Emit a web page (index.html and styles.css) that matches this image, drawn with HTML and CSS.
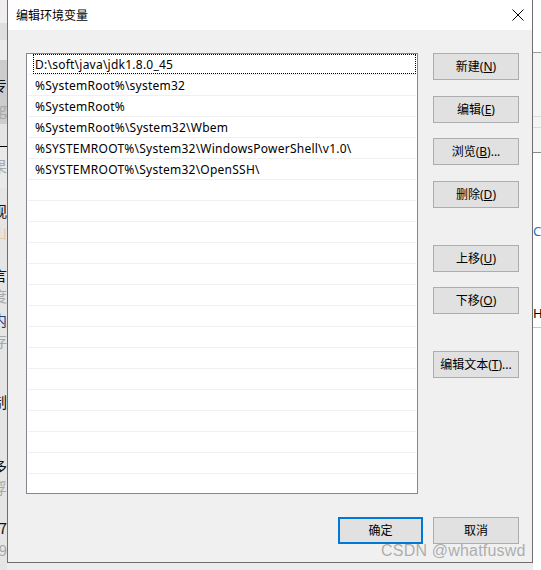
FILE: index.html
```html
<!DOCTYPE html>
<html lang="zh">
<head>
<meta charset="utf-8">
<title>编辑环境变量</title>
<link rel="stylesheet" href="styles.css">
</head>
<body>
<div class="desk">
  <div class="bg-left">
    <div class="bl b1"></div>
    <div class="bl b2"></div>
    <div class="bl b3"></div>
    <div class="bl b4">
      <div class="frag blk t1">专</div>
      <div class="frag gry t2">og</div>
    </div>
    <div class="bl b5"></div>
    <div class="bl b6"><div class="frag gry t3">果</div></div>
    <div class="bl b7">
      <div class="frag blk s1">观</div>
      <div class="frag org s2">山</div>
      <div class="frag blk s3">言</div>
      <div class="frag gry s4">度</div>
      <div class="frag blu s5">内</div>
      <div class="frag gry s6">存</div>
      <div class="frag blk s7">制</div>
      <div class="frag blk s8">多</div>
      <div class="frag gry s9">浮</div>
      <div class="frag blk s10">7</div>
      <div class="frag gry s11">9</div>
    </div>
  </div>

  <div class="dialog">
    <div class="titlebar">
      <span class="title">编辑环境变量</span>
      <svg class="close" width="12" height="12" viewBox="0 0 12 12"><path d="M0.5 0.5 L11.5 11.5 M11.5 0.5 L0.5 11.5" stroke="#000" stroke-width="1" fill="none"/></svg>
    </div>
    <div class="body">
      <div class="main">
        <div class="list">
          <div class="row"><div class="cell focus">D:\soft\java\jdk1.8.0_45</div></div>
          <div class="row"><div class="cell">%SystemRoot%\system32</div></div>
          <div class="row"><div class="cell">%SystemRoot%</div></div>
          <div class="row"><div class="cell">%SystemRoot%\System32\Wbem</div></div>
          <div class="row"><div class="cell">%SYSTEMROOT%\System32\WindowsPowerShell\v1.0\</div></div>
          <div class="row"><div class="cell">%SYSTEMROOT%\System32\OpenSSH\</div></div>
          <div class="row"></div><div class="row"></div><div class="row"></div>
          <div class="row"></div><div class="row"></div><div class="row"></div>
          <div class="row"></div><div class="row"></div><div class="row"></div>
          <div class="row"></div><div class="row"></div><div class="row"></div>
          <div class="row"></div><div class="row"></div><div class="row"></div>
        </div>
        <div class="side">
          <button class="btn">新建(<u>N</u>)</button>
          <button class="btn g16">编辑(<u>E</u>)</button>
          <button class="btn g15">浏览(<u>B</u>)...</button>
          <button class="btn g16">删除(<u>D</u>)</button>
          <button class="btn g37">上移(<u>U</u>)</button>
          <button class="btn g15">下移(<u>O</u>)</button>
          <button class="btn g37">编辑文本(<u>T</u>)...</button>
        </div>
      </div>
      <div class="footer">
        <button class="btn ok">确定</button>
        <button class="btn cancel">取消</button>
      </div>
    </div>
  </div>

  <div class="bg-right">
    <div class="r1"></div>
    <div class="r2"></div>
    <div class="r3"></div>
    <div class="r4"></div>
    <div class="r5"><span class="rc">C</span></div>
    <div class="r6"><span class="rh">HI</span></div>
    <div class="r7"></div>
  </div>

  <div class="watermark">CSDN @whatfuswd</div>
</div>
</body>
</html>
```

FILE: styles.css
```css
* { box-sizing: border-box; }
html, body { margin: 0; padding: 0; }
body {
  width: 541px;
  height: 570px;
  overflow: hidden;
  font-family: "Noto Sans", "Noto Sans CJK SC", sans-serif;
  font-size: 12px;
  color: #000;
  background: #ececec;
}
.desk {
  position: relative;
  display: flex;
  width: 541px;
  height: 570px;
}

/* background window on the left */
.bg-left {
  width: 7px;
  flex: none;
  display: flex;
  flex-direction: column;
  font-family: "Noto Sans CJK SC", sans-serif;
  font-size: 15px;
}
.bl { overflow: hidden; }
.b1 { height: 23px; background: #efeded; }
.b2 { height: 17px; background: #dedede; }
.b3 { height: 20px; background: #ebebeb; }
.b4 { height: 64px; background: #cccccc; padding-top: 14px; }
.b5 { height: 23px; background: #e4e4e4; border-bottom: 1px solid #000; }
.b6 { height: 41px; background: #e9e9e9; padding-top: 8px; }
.b7 { flex: 1; background: #e5e5e5; padding-top: 12px; }
.frag {
  display: flex;
  justify-content: flex-end;
  white-space: nowrap;
  width: 7px;
  overflow: hidden;
  height: 21px;
  line-height: 21px;
}
.blk { color: #111; }
.gry { color: #a8a8a8; }
.org { color: #e8c9a0; }
.blu { color: #1b3d7a; }
.t2 { margin-top: 3px; }
.s3 { margin-top: 22px; }
.s5 { margin-top: 3px; }
.s7 { margin-top: 40px; }
.s8 { margin-top: 43px; }
.s9 { margin-top: 1px; }
.s10 { margin-top: 19px; }
.s11 { margin-top: 1px; }

/* dialog */
.dialog {
  width: 526px;
  height: 563px;
  flex: none;
  border: 1px solid #6f6f6f;
  border-top: none;
  background: #f0f0f0;
  display: flex;
  flex-direction: column;
}
.titlebar {
  height: 30px;
  background: #fff;
  display: flex;
  align-items: center;
  justify-content: space-between;
  padding: 0 8px 0 8px;
  flex: none;
}
.title {
  font-family: "Noto Sans CJK SC", sans-serif;
  font-size: 12px;
  line-height: 16px;
}
.close { display: block; }

.body {
  padding: 23px 13px 0 18px;
  display: flex;
  flex-direction: column;
}
.main {
  display: flex;
  gap: 15px;
}
.list {
  width: 392px;
  height: 441px;
  border: 1px solid #828790;
  background: #fff;
  overflow: hidden;
  padding-right: 1px;
}
.row {
  height: 21px;
  border-bottom: 1px solid #f0f0f0;
  margin-left: 1px;
  padding: 0 0 0 5px;
}
.cell {
  height: 20px;
  line-height: 19px;
  padding-left: 1px;
  white-space: nowrap;
  letter-spacing: 0.24px;
  border: 1px solid transparent;
}
.focus {
  border: 1px dotted #000;
}

.side {
  width: 86px;
  display: flex;
  flex-direction: column;
}
.btn {
  font-family: "Noto Sans", "Noto Sans CJK SC", sans-serif;
  font-size: 12px;
  color: #000;
  height: 27px;
  width: 86px;
  padding: 0;
  background: #e1e1e1;
  border: 1px solid #adadad;
  border-radius: 0;
  line-height: 25px;
  text-align: center;
}
.btn u { text-decoration: underline; text-underline-offset: 1px; }
.g15 { margin-top: 15px; }
.g16 { margin-top: 16px; }
.g37 { margin-top: 37px; }
.footer {
  display: flex;
  justify-content: flex-end;
  gap: 10px;
  margin-top: 23px;
}
.ok {
  width: 85px;
  border: 2px solid #0078d7;
  line-height: 23px;
}

/* background window on the right */
.bg-right {
  flex: 1;
  background: #fff;
  display: flex;
  flex-direction: column;
  overflow: hidden;
  font-family: "Noto Sans", sans-serif;
  font-size: 13px;
}
.r1 { height: 53px; background: #fff; border-bottom: 1px solid #9a9a9a; flex: none; }
.r2 { height: 64px; background: #f5f5f5; border-bottom: 1px solid #dddddd; flex: none; }
.r3 { height: 11px; background: #f5f5f5; border-bottom: 1px solid #dddddd; flex: none; }
.r4 { height: 25px; background: #f5f5f5; border-bottom: 1px solid #8a8a8a; flex: none; }
.r5 { height: 90px; background: #fff; padding-top: 70px; flex: none; }
.rc { color: #1e6fd0; line-height: 16px; display: block; }
.r6 { height: 85px; padding-top: 62px; border-bottom: 1px solid #c8c8c8; flex: none; }
.rh { line-height: 16px; letter-spacing: 1px; display: block; white-space: nowrap; }
.r7 { flex: 1; background: #fff; }

.watermark {
  position: absolute;
  left: 381px;
  top: 541px;
  font-family: "Liberation Sans", Arial, sans-serif;
  font-size: 16px;
  line-height: 20px;
  color: rgba(150, 150, 150, 0.75);
  letter-spacing: 0.2px;
  white-space: nowrap;
}
```
